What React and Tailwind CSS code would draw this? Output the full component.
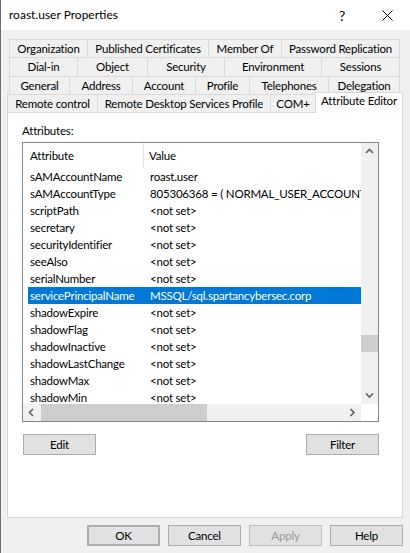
import React from "react";

const tabRows = [
    [
        ["Organization", 78],
        ["Published Certificates", 121],
        ["Member Of", 73],
        ["Password Replication", 119],
    ],
    [
        ["Dial-in", 68],
        ["Object", 70],
        ["Security", 77],
        ["Environment", 97],
        ["Sessions", 79],
    ],
    [
        ["General", 60],
        ["Address", 63],
        ["Account", 63],
        ["Profile", 54],
        ["Telephones", 79],
        ["Delegation", 72],
    ],
];

const rows = [
    ["sAMAccountName", "roast.user"],
    ["sAMAccountType", "805306368 = ( NORMAL_USER_ACCOUNT )"],
    ["scriptPath", "<not set>"],
    ["secretary", "<not set>"],
    ["securityIdentifier", "<not set>"],
    ["seeAlso", "<not set>"],
    ["serialNumber", "<not set>"],
    ["servicePrincipalName", "MSSQL/sql.spartancybersec.corp", true],
    ["shadowExpire", "<not set>"],
    ["shadowFlag", "<not set>"],
    ["shadowInactive", "<not set>"],
    ["shadowLastChange", "<not set>"],
    ["shadowMax", "<not set>"],
    ["shadowMin", "<not set>"],
];

const Chevron = ({ dir }) => {
    const pts = {
        up: "1,5 4.5,1.5 8,5",
        down: "1,1.5 4.5,5 8,1.5",
        left: "5,1 1.5,4.5 5,8",
        right: "1.5,1 5,4.5 1.5,8",
    }[dir];
    const wide = dir === "up" || dir === "down";
    return (
        <svg width={wide ? 9 : 7} height={wide ? 7 : 9} viewBox={wide ? "0 0 9 7" : "0 0 7 9"}>
            <polyline points={pts} fill="none" stroke="#606060" strokeWidth="1.6" />
        </svg>
    );
};

const Button = ({ children, className = "" }) => (
    <div className={`w-[73px] h-[21px] flex items-center justify-center border border-[#adadad] bg-[#e1e1e1] ${className}`}>
        {children}
    </div>
);

export default function App() {
    return (
        <div
            className="w-[410px] h-[553px] bg-[#f0f0f0] border-l border-[#6f6f6f] flex flex-col text-[11.5px] tracking-[-0.2px] text-black overflow-hidden"
            style={{ fontFamily: "Lato, 'Liberation Sans', sans-serif" }}
        >
            {/* Title bar */}
            <div className="h-[30px] bg-white flex items-center pl-[8px] shrink-0">
                <span className="text-[12px] tracking-normal">roast.user Properties</span>
                <span className="ml-auto text-[14px] mr-[37px]">?</span>
                <svg width="11" height="11" viewBox="0 0 11 11" className="mr-[17px]">
                    <path d="M0.5 0.5 L10.5 10.5 M10.5 0.5 L0.5 10.5" stroke="#000" strokeWidth="1" />
                </svg>
            </div>

            {/* Tabs */}
            <div className="pt-[9px] flex flex-col">
                {tabRows.map((r, i) => (
                    <div key={i} className={`ml-[8px] flex ${i === 1 ? "h-[19px]" : "h-[18px]"}`}>
                        {r.map(([label, w], j) => (
                            <div
                                key={label}
                                className={`flex items-center justify-center border-t border-l border-[#d9d9d9] ${j === r.length - 1 ? "border-r" : ""}`}
                                style={{ width: w }}
                            >
                                {label}
                            </div>
                        ))}
                    </div>
                ))}
                <div className="ml-[6px] flex h-[18px] items-start">
                    <div className="w-[90px] h-[18px] flex items-center justify-center border-t border-l border-[#d9d9d9]">Remote control</div>
                    <div className="w-[173px] h-[18px] flex items-center justify-center border-t border-l border-[#d9d9d9]">Remote Desktop Services Profile</div>
                    <div className="w-[45px] h-[18px] flex items-center justify-center border-t border-l border-[#d9d9d9]">COM+</div>
                    <div className="relative z-10 w-[88px] h-[21px] -mt-[2px] pb-[4px] flex items-center justify-center bg-white border-t border-l border-r border-[#d9d9d9]">
                        Attribute Editor
                    </div>
                </div>
            </div>

            {/* Panel */}
            <div className="ml-[6px] w-[396px] h-[406px] bg-white border border-[#d9d9d9] flex flex-col shrink-0">
                <div className="pl-[14px] pt-[11px] h-[29px] leading-[14px]">Attributes:</div>
                <div className="ml-[14px] w-[357px] h-[280px] border border-[#828790] flex flex-col">
                    <div className="flex h-[261px]">
                        <div className="w-[338px] flex flex-col">
                            <div className="h-[25px] flex items-center pl-[5px]">
                                <div className="w-[116px] h-full pl-[2px] flex items-center border-r border-[#e5e5e5]">Attribute</div>
                                <div className="pl-[5px]">Value</div>
                            </div>
                            <div className="h-[236px] overflow-hidden pl-[5px]">
                                {rows.map(([a, v, sel]) => (
                                    <div
                                        key={a}
                                        className={`h-[17px] flex items-center whitespace-nowrap overflow-hidden ${sel ? "bg-[#0078d7] text-white" : ""}`}
                                    >
                                        <div className="w-[122px] pl-[2px] shrink-0">{a}</div>
                                        <div className="shrink-0">{v}</div>
                                    </div>
                                ))}
                            </div>
                        </div>
                        <div className="w-[17px] bg-[#f0f0f0] flex flex-col">
                            <div className="h-[17px] flex items-center justify-center"><Chevron dir="up" /></div>
                            <div className="flex-1 pt-[175px]">
                                <div className="h-[17px] bg-[#cdcdcd]" />
                            </div>
                            <div className="h-[17px] flex items-center justify-center"><Chevron dir="down" /></div>
                        </div>
                    </div>
                    <div className="flex h-[17px]">
                        <div className="w-[338px] bg-[#f0f0f0] flex items-center">
                            <div className="w-[17px] h-full flex items-center justify-center"><Chevron dir="left" /></div>
                            <div className="ml-[1px] w-[166px] h-full bg-[#cdcdcd]" />
                            <div className="ml-auto w-[17px] h-full flex items-center justify-center"><Chevron dir="right" /></div>
                        </div>
                        <div className="w-[17px] bg-white" />
                    </div>
                </div>
                <div className="mt-[12px] pl-[15px] pr-[23px] flex justify-between">
                    <Button>Edit</Button>
                    <Button>Filter</Button>
                </div>
            </div>

            {/* Dialog buttons */}
            <div className="mt-[7px] flex justify-end gap-[8px] pr-[7px]">
                <Button className="border-2 border-[#0078d7]">OK</Button>
                <Button>Cancel</Button>
                <Button className="bg-[#cccccc] border-[#bfbfbf] text-[#9a9a9a]">Apply</Button>
                <Button>Help</Button>
            </div>
        </div>
    );
}
